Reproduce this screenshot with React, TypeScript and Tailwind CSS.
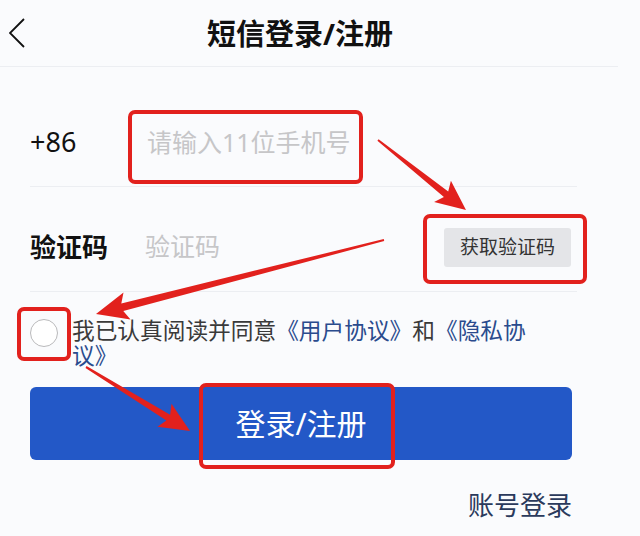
import React from "react";

const cjk = "font-['Noto_Sans','Noto_Sans_CJK_SC',sans-serif]";

type Pt = [number, number];

// tapered annotation arrow: thin tail, thicker shaft near the head
function arrowPoints(tail: Pt, tip: Pt, tw: number, sw: number, hl: number, hw: number) {
  const dx = tip[0] - tail[0];
  const dy = tip[1] - tail[1];
  const len = Math.hypot(dx, dy);
  const ux = dx / len;
  const uy = dy / len;
  const nx = -uy;
  const ny = ux;
  const bx = tip[0] - ux * hl;
  const by = tip[1] - uy * hl;
  const nb = hl * 0.15;
  const pts: Pt[] = [
    [tail[0] + (nx * tw) / 2, tail[1] + (ny * tw) / 2],
    [bx + ux * nb + (nx * sw) / 2, by + uy * nb + (ny * sw) / 2],
    [bx + (nx * hw) / 2, by + (ny * hw) / 2],
    tip,
    [bx - (nx * hw) / 2, by - (ny * hw) / 2],
    [bx + ux * nb - (nx * sw) / 2, by + uy * nb - (ny * sw) / 2],
    [tail[0] - (nx * tw) / 2, tail[1] - (ny * tw) / 2],
  ];
  return pts.map((p) => `${p[0].toFixed(1)},${p[1].toFixed(1)}`).join(" ");
}

function Annotations() {
  const red = "#e2211d";
  const boxes = [
    { x: 130, y: 112, w: 231, h: 70 },
    { x: 425, y: 216, w: 160, h: 66 },
    { x: 19, y: 309, w: 50, h: 50 },
    { x: 201, y: 385, w: 192, h: 82 },
  ];
  return (
    <svg className="absolute inset-0 pointer-events-none" width="640" height="536" viewBox="0 0 640 536">
      {boxes.map((b, i) => (
        <rect key={i} x={b.x} y={b.y} width={b.w} height={b.h} rx="5" fill="none" stroke={red} strokeWidth="4" />
      ))}
      <polygon fill={red} points={arrowPoints([378, 140], [466, 210], 2, 7, 30, 27)} />
      <polygon fill={red} points={arrowPoints([384, 240], [96, 314], 2, 8, 32, 28)} />
      <polygon fill={red} points={arrowPoints([86, 367], [190, 431], 2, 7, 30, 27)} />
    </svg>
  );
}

export default function App() {
  return (
    <div className={`relative w-[640px] h-[536px] overflow-hidden bg-[#fafbfd] ${cjk}`}>
      {/* 顶部标题栏 */}
      <div className="grid grid-cols-[50px_1fr_68px] items-center h-[67px] w-[618px] border-b border-[#eceef2]">
        <div className="pl-[9px]">
          <svg width="17" height="30" viewBox="0 0 17 30">
            <polyline points="15,1 1,15 15,29" fill="none" stroke="#111" strokeWidth="1.8" />
          </svg>
        </div>
        <h1 className="text-center text-[29px] font-bold text-[#111] leading-none">短信登录/注册</h1>
        <div />
      </div>

      {/* 表单 */}
      <div className="w-[577px] pl-[30px]">
        <div className="flex items-center pt-[32px] h-[120px] border-b border-[#eceef2]">
          <span className="w-[117px] text-[27px] text-[#111]">+86</span>
          <input
            className="flex-1 bg-transparent outline-none text-[25px] placeholder-[#c6c6c8]"
            placeholder="请输入11位手机号"
          />
        </div>

        <div className="flex items-center pt-[16px] h-[105px] border-b border-[#eceef2]">
          <span className="w-[115px] text-[26px] font-bold text-[#111]">验证码</span>
          <input
            className="w-[200px] bg-transparent outline-none text-[25px] placeholder-[#c6c6c8]"
            placeholder="验证码"
          />
          <button className="ml-auto mr-[6px] w-[127px] h-[39px] rounded-[3px] bg-[#e4e5e8] text-[19px] text-[#333]">
            获取验证码
          </button>
        </div>

        <div className="flex items-start gap-[14px] pt-[26px]">
          <span className="mt-[1px] w-[28px] h-[28px] shrink-0 rounded-full border border-[#b9b9bb] bg-white" />
          <p className="w-[470px] text-[22.7px] leading-[25px] text-[#3a3a3a]">
            我已认真阅读并同意<span className="text-[#2a4b8d]">《用户协议》</span>和<span className="text-[#2a4b8d]">《隐私协议》</span>
          </p>
        </div>

        <button className="mt-[19px] w-[542px] h-[73px] rounded-[6px] bg-[#2358c7] text-white text-[30px]">
          登录/注册
        </button>

        <div className="mt-[30px] w-[542px] text-right text-[26px] leading-[30px] text-[#2b3a5c]">账号登录</div>
      </div>

      <Annotations />
    </div>
  );
}
